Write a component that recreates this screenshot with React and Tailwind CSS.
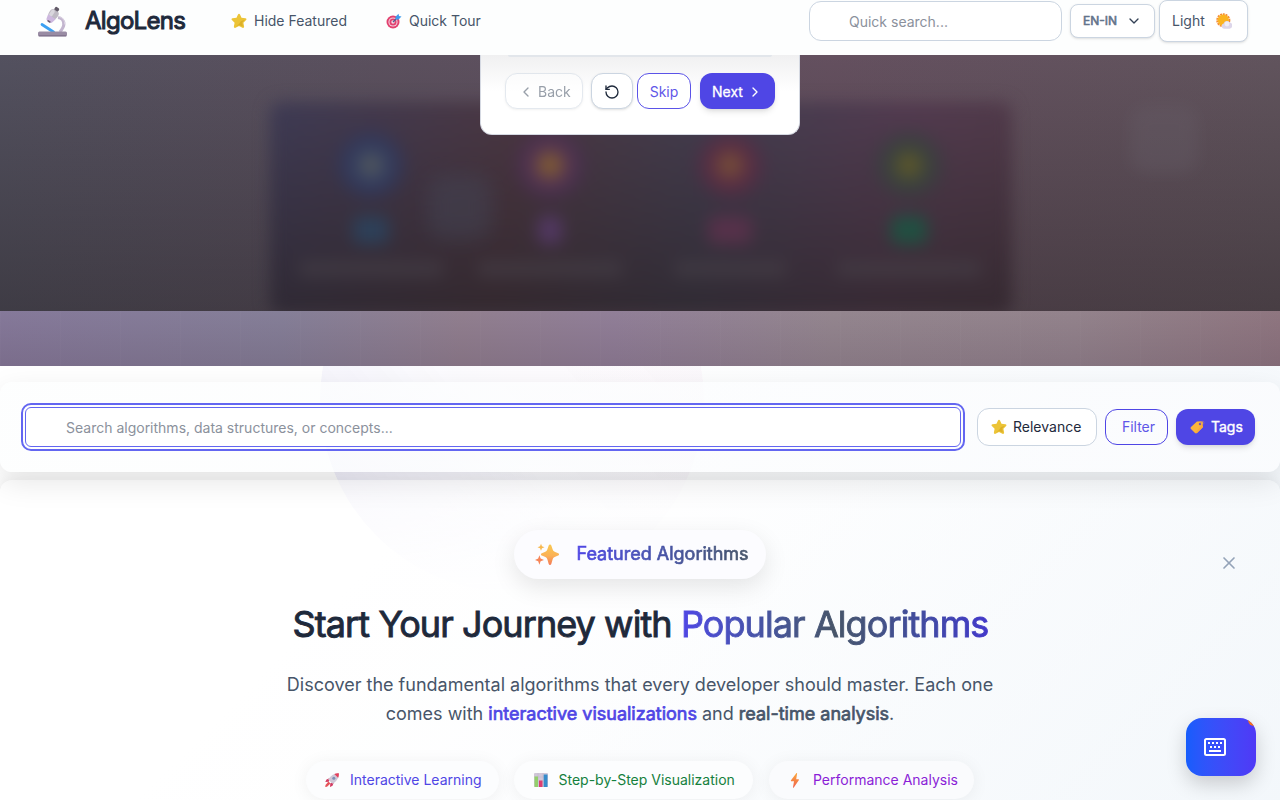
import React from "react";
import { ChevronDown, ChevronLeft, ChevronRight, RotateCcw, X } from "lucide-react";

function Microscope() {
  return (
    <svg viewBox="0 0 32 32" className="size-8 shrink-0">
      <path d="M22 12.500c4 .5 6 3.500 5.800 7-.2 3.200-1.800 5-4 7.500" stroke="#c3b6cf" strokeWidth="3.200" fill="none" />
      <path d="M22 11.500c4.200.4 7 3.800 6.700 8" stroke="#ddd5e4" strokeWidth="1" fill="none" />
      <g transform="rotate(33 17 10)">
        <rect x="12.200" y="4.500" width="9.600" height="9" rx="3.500" fill="#bfbac4" />
        <rect x="13.200" y="5.200" width="3.600" height="7.500" rx="1.800" fill="#d9d6dd" />
        <path d="M12.500 12h9l-1 4.500a2 2 0 0 1-2 1.500h-3a2 2 0 0 1-2-1.500z" fill="#cdb8df" />
        <rect x="15.300" y="16.800" width="3.600" height="1.600" rx=".8" fill="#67596f" />
        <rect x="14.700" y="1.300" width="4.600" height="3.600" rx="1.200" fill="#625a68" />
      </g>
      <path d="M6 19.500l11.500 7.500" stroke="#3ba0f2" strokeWidth="2.800" strokeLinecap="round" />
      <rect x="2" y="26.500" width="29" height="5" rx="1.500" fill="#998ca4" />
      <path d="M3 30.700h27" stroke="#80738d" strokeWidth="1.200" />
    </svg>
  );
}

function Star() {
  return (
    <svg viewBox="0 0 16 16" className="size-4 shrink-0">
      <path d="M8 .8c.4 0 .8.200 1 .7l1.500 3.300 4 .5c1 .1 1.300 1.200.6 1.800l-2.700 2.700.7 3.800c.2 1-.8 1.700-1.600 1.200L8 13l-3.500 1.800c-.8.5-1.800-.2-1.600-1.200l.7-3.800L.9 7.100C.2 6.500.5 5.400 1.500 5.300l4-.5L7 1.500c.2-.5.600-.7 1-.7z" fill="#ecc437" />
      <path d="M14 6.800L11.200 9.600l.6 4-3.600-1.700-3.400 1.600L8 11l2-3z" fill="#dcb029" />
    </svg>
  );
}

function Target() {
  return (
    <svg viewBox="0 0 16 16" className="size-4 shrink-0">
      <circle cx="7" cy="9" r="6.500" fill="#e2416f" />
      <circle cx="7" cy="9" r="4.600" fill="#f3cfdd" />
      <circle cx="7" cy="9" r="3.500" fill="#e2416f" />
      <circle cx="7" cy="9" r="1.700" fill="#f6dbe6" />
      <path d="M7 9l4.500-4.500" stroke="#4d5c8f" strokeWidth="1.200" />
      <path d="M9.500 3.800L12.500.8l.5 2.200 2.500.6-3 3-2.800-.2z" fill="#3e9bec" />
    </svg>
  );
}

function SunCloud() {
  return (
    <svg viewBox="0 0 16 16" className="size-4 shrink-0">
      <circle cx="7.300" cy="7.300" r="6.200" fill="none" stroke="#f58a35" strokeWidth="1.700" strokeDasharray="2 .8" />
      <circle cx="7.300" cy="7.300" r="5.700" fill="#fbb421" />
      <path d="M8 15.700a2.600 2.600 0 0 1-.3-5.100 3.400 3.400 0 0 1 6-1.200 3.200 3.200 0 0 1-.1 6.300z" fill="#ddd6ea" />
      <circle cx="11" cy="11" r="2.400" fill="#f0edf6" />
    </svg>
  );
}

function Tag() {
  return (
    <svg viewBox="0 0 16 16" className="size-4 shrink-0">
      <path d="M8.500 2.600l4.300-.3c.6 0 1 .4 1 1l.2 4c0 .4-.1.800-.4 1.100L8 14c-.6.600-1.400.6-2 0L2 10c-.6-.6-.6-1.400 0-2l5.400-5c.3-.3.700-.4 1.100-.4z" fill="#fbb43b" />
      <path d="M8 14l5.600-5.600.4-1.300-.1-2L6 13.900z" fill="#f9a838" />
      <circle cx="11" cy="5" r="1.200" fill="#7350b8" />
      <path d="M11 5c1-3 4-3.500 4-1.500 0 1.300-1 2.300-2 2.700" stroke="#9a70a8" strokeWidth=".7" fill="none" />
    </svg>
  );
}

function Sparkles() {
  return (
    <svg viewBox="0 0 24 24" className="size-6 shrink-0">
      <defs>
        <linearGradient id="spark" x1="0" y1="0" x2="0" y2="1">
          <stop offset="0" stopColor="#f8c852" />
          <stop offset=".55" stopColor="#fbb156" />
          <stop offset="1" stopColor="#f37a59" />
        </linearGradient>
      </defs>
      <path d="M15 1.500c.7 0 1.100.4 1.300 1l1.300 3.800c.5 1.500 1.100 2.200 2.600 2.800l3 1.100c1.200.5 1.200 1.900 0 2.400l-3 1.100c-1.500.6-2.100 1.300-2.600 2.800l-1.300 4.600c-.4 1.300-2.200 1.300-2.600 0l-1.300-4.600c-.5-1.500-1.100-2.200-2.600-2.800l-3-1.100c-1.200-.5-1.200-1.900 0-2.400l3-1.100c1.500-.6 2.100-1.300 2.600-2.800l1.300-3.800c.2-.6.600-1 1.300-1z" fill="url(#spark)" />
      <path d="M6 .8l1 2.400 2.500 1L7 5.300 6 7.700 5 5.300 2.500 4.200 5 3.200z" fill="#f7b951" />
      <path d="M4.400 12.200l1.200 3.400L9 17l-3.400 1.300-1.200 3.500-1.200-3.500L0 17l3.200-1.400z" fill="#f68558" />
    </svg>
  );
}

function Rocket() {
  return (
    <svg viewBox="0 0 16 16" className="size-4 shrink-0">
      <path d="M6 6L2.500 7.500 1.300 10l3.500-.3zM10 10l-1.500 3.800L6 15l.3-3.800z" fill="#d33b62" />
      <path d="M14.800 1.200c.4 3.800-1.500 7.600-6.300 10.600L4.200 7.500C7.200 3 11 .8 14.800 1.200z" fill="#cfc7d6" />
      <path d="M14.800 1.200c.2 1.600 0 3-.7 4.500l-3.800-3.800c1.500-.6 3-.9 4.500-.7z" fill="#e5405b" />
      <circle cx="9.800" cy="6.200" r="1.500" fill="#7c8fb5" />
      <path d="M4.500 9.500l2 2L3 14.800l-1.800.2.300-2z" fill="#e65459" />
    </svg>
  );
}

function BarChart() {
  return (
    <svg viewBox="0 0 16 16" className="size-4 shrink-0">
      <rect x="1" y="1" width="14" height="14" rx="1" fill="#d0c7d8" />
      <path d="M1 5h14M1 10h14M5 1v14M10 1v14" stroke="#bcb1c8" strokeWidth=".5" />
      <rect x="1.500" y="4.500" width="3.500" height="10.500" fill="#93cf6c" />
      <rect x="6" y="8.500" width="3.500" height="6.500" fill="#dc3e71" />
      <rect x="10.700" y="2.500" width="3.800" height="12.500" fill="#368ccb" />
    </svg>
  );
}

function Bolt() {
  return (
    <svg viewBox="0 0 16 16" className="size-4 shrink-0">
      <defs>
        <linearGradient id="bolt" x1="0" y1="0" x2="0" y2="1">
          <stop offset="0" stopColor="#fba83b" />
          <stop offset="1" stopColor="#f0624f" />
        </linearGradient>
      </defs>
      <path d="M9.300 1.200L4 8.200c-.3.500-.1 1 .5 1H7l-1 6c0 .6.500.7.800.3l5-7.200c.3-.5.100-1-.5-1H9.200l.9-5.700c.1-.6-.4-.8-.8-.4z" fill="url(#bolt)" />
    </svg>
  );
}

function Keyboard() {
  return (
    <svg viewBox="0 0 24 24" className="size-6" fill="#fff">
      <rect x="2" y="4" width="20" height="16" rx="1.500" fill="none" stroke="#fff" strokeWidth="2" />
      <path d="M5 7h2v2H5zM9 7h2v2H9zM13 7h2v2h-2zM17 7h2v2h-2zM7 11h2v2H7zM11 11h2v2h-2zM15 11h2v2h-2zM6 15h12v2H6z" />
    </svg>
  );
}

function Header() {
  return (
    <header className="relative z-20 flex h-[55px] w-full shrink-0 items-start bg-[#fdfefe] text-sm text-[#475569]">
      <div className="flex h-[42px] items-center pl-9">
        <Microscope />
        <span className="ml-[17px] w-[101px] whitespace-nowrap text-2xl tracking-[-0.03em] text-[#1e293b] [-webkit-text-stroke:1px_#1e293b]">AlgoLens</span>
      </div>
      <nav className="flex h-[42px] items-center pl-[44.500px]">
        <a className="flex w-[155px] items-center gap-[7.500px]"><Star />Hide Featured</a>
        <a className="flex items-center gap-[7.500px]"><Target />Quick Tour</a>
      </nav>
      <div className="ml-auto flex items-start pr-8">
        <div className="mt-px flex h-10 w-[253px] items-center rounded-xl border border-[#cbd5e1] bg-white pl-[39px] pt-[2px] text-[#8b919c]">Quick search...</div>
        <button className="ml-2 mt-1 flex h-[34px] w-[85px] items-center gap-[9px] rounded-lg border border-[#cbd5e1] bg-white pl-3 text-xs text-[#64748b] shadow-sm [-webkit-text-stroke:0.6px_#64748b]">
          EN-IN<ChevronDown className="size-4 text-[#334155]" strokeWidth={2} />
        </button>
        <button className="ml-1 flex h-[42px] w-[89px] items-center gap-[11px] rounded-lg border border-[#cbd5e1] bg-white pl-3 shadow-sm">
          Light<SunCloud />
        </button>
      </div>
    </header>
  );
}

const stats = [
  { glow: "bg-[#2e3961]", core: "bg-[#5e625c]", value: "bg-[#2d4059] w-9", label: "w-36" },
  { glow: "bg-[#4f2f58]", core: "bg-[#967022]", value: "bg-[#523862] w-6", label: "w-36" },
  { glow: "bg-[#592a45]", core: "bg-[#805c34]", value: "bg-[#56314a] w-11", label: "w-28" },
  { glow: "bg-[#35413f]", core: "bg-[#6e6023]", value: "bg-[#205041] w-9", label: "w-36" },
];

function Hero() {
  return (
    <section className="relative flex h-[311px] w-full shrink-0 flex-col overflow-hidden">
      <div className="flex h-64 w-full justify-center overflow-hidden bg-[linear-gradient(180deg,rgba(0,0,0,0),rgba(24,20,20,0.35)),linear-gradient(90deg,#53515f,#5b505e_30%,#64505f_65%,#61545d)] pt-[47px]">
        <div className="ml-0.5 grid h-[212px] w-[742px] grid-cols-4 rounded-xl bg-[linear-gradient(180deg,rgba(25,20,22,0),rgba(38,32,36,0.65)),linear-gradient(100deg,#3e3b55,#4b3742_33%,#433e50_58%,#533b50_82%,#503a48)] pl-[11px] pr-[13px] pt-[33px] blur-[8px]">
          {stats.map((s, i) => (
            <div key={i} className="flex flex-col items-center">
              <div className={`flex size-[60px] items-center justify-center rounded-full blur-[7px] ${s.glow}`}>
                <div className={`size-6 rounded-full ${s.core}`} />
              </div>
              <div className={`mt-[21px] h-7 rounded-md blur-[2px] ${s.value}`} />
              <div className={`mt-[17px] h-4 rounded-sm bg-[#463f48] opacity-60 ${s.label}`} />
            </div>
          ))}
        </div>
      </div>
      <div className="h-[55px] w-full bg-[repeating-linear-gradient(90deg,rgba(255,255,255,0.015)_0px,rgba(255,255,255,0.015)_1px,transparent_1px,transparent_60px),linear-gradient(180deg,rgba(80,60,80,0),rgba(80,60,80,0.2)),linear-gradient(90deg,#85799a,#857f98_22%,#917f8f_36%,#917f98_48%,#94868f_65%,#93838c_84%,#8f7680)]" />
      <div className="absolute left-[428px] top-[120px] size-16 rounded-2xl bg-[#45495a] opacity-40 blur-[10px]" />
      <div className="absolute left-[1130px] top-[50px] size-[68px] rounded-2xl bg-[#68606a] opacity-30 blur-[8px]" />
    </section>
  );
}

function TourCard() {
  return (
    <div className="absolute left-[480px] top-[55px] z-10 flex h-[79.500px] w-80 flex-col rounded-b-xl border border-t-0 border-[#d5d9e2] bg-[linear-gradient(180deg,#f0f0f1,#ffffff_36px)] px-6 text-sm">
      <div className="mx-[3px] h-[2px] shrink-0 rounded-b bg-[#e2e6eb]" />
      <div className="mt-4 flex h-9 items-center [&>button]:pt-px">
        <button className="flex h-[36.500px] w-[78px] items-center gap-1 rounded-xl border border-[#cbd5e1] bg-white pl-3 text-[#334155] opacity-50 shadow-sm"><ChevronLeft className="size-4" />Back</button>
        <button className="ml-2 flex h-[36.500px] w-[42px] items-center justify-center rounded-xl border border-[#cbd5e1] bg-white text-[#1e293b] shadow-sm"><RotateCcw className="size-4" /></button>
        <button className="ml-1 flex h-[36.500px] w-[54px] items-center justify-center rounded-xl border border-[#5b53e8] bg-white text-[#5f57e8]">Skip</button>
        <button className="ml-[9px] flex h-[36.500px] w-[75px] items-center gap-1 rounded-xl bg-[#4f46e5] pl-3 text-white shadow-md [-webkit-text-stroke:0.3px_#fff]">Next<ChevronRight className="size-4" /></button>
      </div>
    </div>
  );
}

function SearchPanel() {
  return (
    <section className="relative z-10 mt-4 flex h-[90px] w-full shrink-0 items-center rounded-xl bg-[linear-gradient(90deg,rgba(253,254,254,0.8),rgba(251,252,254,0.8))] px-[25px] text-sm shadow-[0_10px_30px_rgba(0,0,0,0.1)]">
      <div className="flex h-10 w-[936px] items-center rounded-md border border-[#6366f1] bg-white pl-10 pt-[2px] text-[#8b919c] outline-2 outline-offset-2 outline-[#6366f1]">Search algorithms, data structures, or concepts...</div>
      <button className="ml-4 flex h-[38px] w-[120px] items-center gap-1.5 rounded-xl border border-[#cbd5e1] bg-white pl-[13px] text-[#1e293b]"><Star />Relevance</button>
      <button className="ml-2 h-9 w-[63px] rounded-xl border border-[#4f46e5] pl-1 text-[#5f57e8]">Filter</button>
      <button className="ml-2 flex h-9 w-[79px] items-center gap-1.5 rounded-xl bg-[#4f46e5] pl-[13px] text-white shadow-md [-webkit-text-stroke:0.4px_#fff]"><Tag />Tags</button>
    </section>
  );
}

function Featured() {
  return (
    <section className="relative mt-2 flex h-[320px] w-full shrink-0 flex-col items-center overflow-hidden rounded-t-xl bg-[linear-gradient(135deg,rgba(255,255,255,0.65)_45%,rgba(244,248,251,0.65))] pt-[50px] shadow-[0_0_14px_rgba(0,0,0,0.09)]">
      <div className="flex h-[49px] w-[252px] shrink-0 items-center gap-[17.500px] rounded-full bg-[#fcfcff] pl-[21px] shadow-[0_8px_24px_rgba(0,0,0,0.1)]">
        <Sparkles />
        <span className="-mt-[2px] whitespace-nowrap bg-linear-to-r from-[#4f46e5] to-[#475569] bg-clip-text text-lg text-transparent [-webkit-text-stroke:0.7px_transparent]">Featured Algorithms</span>
      </div>
      <h2 className="mt-[23px] whitespace-nowrap pl-px text-4xl leading-[45px] tracking-[-0.0255em] text-[#1e293b] [-webkit-text-stroke:0.9px_#1e293b]">
        Start Your Journey with <span className="bg-linear-to-r from-[#4f46e5] via-[#475569] to-[#4338ca] bg-clip-text text-transparent [-webkit-text-stroke:0.9px_transparent]">Popular Algorithms</span>
      </h2>
      <p className="mt-[23px] w-[740px] text-center text-lg leading-[29.250px] text-[#475569]">
        Discover the fundamental algorithms that every developer should master. Each one<br />
        comes with <span className="text-[#4f46e5] [-webkit-text-stroke:0.7px_#4f46e5]">interactive visualizations</span> and <span className="[-webkit-text-stroke:0.7px_#475569]">real-time analysis</span>.
      </p>
      <div className="mt-[32px] flex h-[38px] shrink-0 text-sm">
        <div className="flex w-[193px] items-center gap-2.5 rounded-full bg-[#fcfdfe] pl-[18px] text-[#4f46e5] shadow-[0_2px_18px_rgba(0,0,0,0.06)]"><Rocket />Interactive Learning</div>
        <div className="ml-[15px] flex w-[239px] items-center gap-2.5 rounded-full bg-[#fcfdfe] pl-[18.500px] text-[#15803d] shadow-[0_2px_18px_rgba(0,0,0,0.06)]"><BarChart />Step-by-Step Visualization</div>
        <div className="ml-4 flex w-[205px] items-center gap-2.5 rounded-full bg-[#fafbfd] pl-[18px] text-[#8b1ed7] shadow-[0_2px_18px_rgba(0,0,0,0.06)]"><Bolt />Performance Analysis</div>
      </div>
      <X className="absolute left-[1219px] top-[73px] size-5 text-[#94a3b8]" strokeWidth={2} />
    </section>
  );
}

export default function App() {
  return (
    <div className="relative flex h-[800px] w-[1280px] flex-col overflow-hidden bg-[linear-gradient(135deg,#ffffff_45%,#f1f6fb)] font-['Inter','Liberation_Sans',sans-serif]">
      <div className="absolute left-80 top-[208px] size-96 rounded-full bg-[linear-gradient(50deg,rgba(99,90,210,0.11)_15%,rgba(120,100,220,0.03)_45%,rgba(236,72,153,0.05))] [mask-image:linear-gradient(180deg,rgba(0,0,0,0.7)_45%,#000_65%,transparent)]" />
      <Header />
      <Hero />
      <TourCard />
      <SearchPanel />
      <Featured />
      <button className="absolute left-[1186px] top-[718px] flex h-[58px] w-[70px] items-center overflow-hidden rounded-2xl bg-linear-to-r from-[#155dfc] to-[#4f39f6] pl-[17px] shadow-[0_8px_20px_rgba(0,0,0,0.18)]">
        <Keyboard />
        <span className="absolute -right-1 -top-1 size-3 rounded-full bg-[#f97316]" />
      </button>
    </div>
  );
}
